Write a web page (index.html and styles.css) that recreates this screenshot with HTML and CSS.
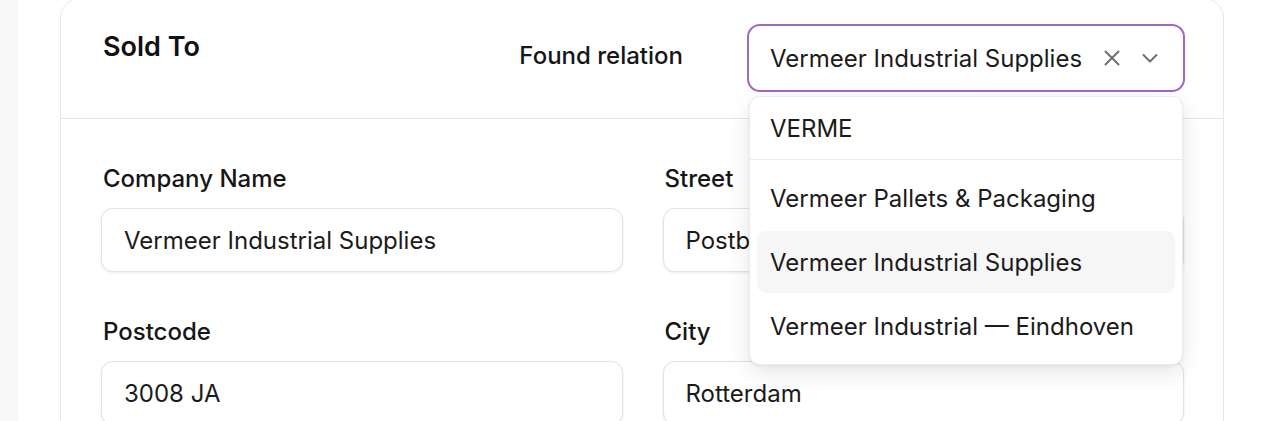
FILE: index.html
```html
<!DOCTYPE html>
<html lang="en">
<head>
    <meta charset="UTF-8">
    <meta name="viewport" content="width=device-width, initial-scale=1.0">
    <title>Sold To</title>
    <link rel="stylesheet" href="styles.css">
</head>
<body>
    <div class="page">
        <div class="rail"></div>
        <main class="main">
            <section class="card">
                <header class="card-head">
                    <h2 class="card-title">Sold To</h2>
                    <div class="relation">
                        <span class="relation-label">Found relation</span>
                        <div class="combo">
                            <div class="combo-box">
                                <span class="combo-value">Vermeer Industrial Supplies</span>
                                <svg class="combo-icon clear" width="20" height="20" viewBox="0 0 20 20" fill="none" stroke="currentColor" stroke-width="2" stroke-linecap="round">
                                    <path d="M3.5 3.5l13 13M16.5 3.5l-13 13"/>
                                </svg>
                                <svg class="combo-icon" width="18" height="18" viewBox="0 0 18 18" fill="none" stroke="currentColor" stroke-width="2" stroke-linecap="round" stroke-linejoin="round">
                                    <path d="M2.5 6l6.5 6.5L15.5 6"/>
                                </svg>
                            </div>

                            <!-- open dropdown -->
                            <div class="menu">
                                <div class="menu-query">VERME</div>
                                <ul class="menu-list">
                                    <li class="menu-item">Vermeer Pallets &amp; Packaging</li>
                                    <li class="menu-item active">Vermeer Industrial Supplies</li>
                                    <li class="menu-item">Vermeer Industrial — Eindhoven</li>
                                </ul>
                            </div>
                        </div>
                    </div>
                </header>

                <form class="card-body">
                    <div class="field">
                        <label for="company">Company Name</label>
                        <input type="text" id="company" value="Vermeer Industrial Supplies">
                    </div>
                    <div class="field">
                        <label for="street">Street</label>
                        <input type="text" id="street" value="Postbus 1822">
                    </div>
                    <div class="field">
                        <label for="postcode">Postcode</label>
                        <input type="text" id="postcode" value="3008 JA">
                    </div>
                    <div class="field">
                        <label for="city">City</label>
                        <input type="text" id="city" value="Rotterdam">
                    </div>
                </form>
            </section>
        </main>
    </div>
</body>
</html>
```

FILE: styles.css
```css
* {
    margin: 0;
    padding: 0;
    box-sizing: border-box;
}

body {
    background-color: #fff;
    font-family: 'Inter', 'Liberation Sans', sans-serif;
    color: #1b1b1b;
    overflow: hidden;
}

.page {
    display: flex;
    min-height: 100vh;
}

.rail {
    width: 18px;
    background-color: #f8f8f9;
}

.main {
    flex: 1;
    padding: 0 40px 0 42px;
}

.card {
    margin-top: -2px;
    border: 1px solid #e8e8e8;
    border-radius: 20px;
    background-color: #fff;
}

.card-head {
    display: flex;
    justify-content: space-between;
    align-items: flex-start;
    padding: 25px 38px 26px 42px;
    border-bottom: 1px solid #e6e6e6;
}

.card-title {
    margin-top: 7px;
    font-size: 27px;
    line-height: 32px;
    font-weight: 600;
    color: #111;
}

.relation {
    display: flex;
    align-items: flex-start;
    gap: 64px;
}

.relation-label {
    margin-top: 17px;
    font-size: 24px;
    line-height: 30px;
    font-weight: 500;
    color: #161616;
}

.combo {
    position: relative;
    width: 438px;
}

.combo-box {
    display: flex;
    align-items: center;
    height: 68px;
    padding: 0 24px 0 21px;
    border: 2px solid #9d68c6;
    border-radius: 13px;
}

.combo-value {
    flex: 1;
    min-width: 0;
    white-space: nowrap;
    font-size: 24px;
    color: #1b1b1b;
}

.combo-icon {
    flex-shrink: 0;
    color: #707070;
}

.combo-icon.clear {
    margin-right: 19px;
}

.menu {
    position: absolute;
    top: 72px;
    left: 2px;
    width: 434px;
    background-color: #fff;
    border: 1px solid #ececec;
    border-radius: 11px;
    box-shadow: 0 8px 22px rgba(0, 0, 0, 0.10), 0 1px 3px rgba(0, 0, 0, 0.06);
    z-index: 2;
}

.menu-query {
    height: 63px;
    display: flex;
    align-items: center;
    padding-left: 20px;
    font-size: 24px;
    border-bottom: 1px solid #ededed;
}

.menu-list {
    list-style: none;
    display: flex;
    flex-direction: column;
    gap: 2px;
    padding: 7px;
}

.menu-item {
    height: 62px;
    display: flex;
    align-items: center;
    padding-left: 13px;
    font-size: 24px;
    border-radius: 9px;
}

.menu-item.active {
    background-color: #f6f6f6;
}

.card-body {
    display: grid;
    grid-template-columns: 1fr 1fr;
    column-gap: 40px;
    row-gap: 46px;
    padding: 46px 39px 40px 40px;
}

.field label {
    display: block;
    margin-bottom: 15px;
    padding-left: 2px;
    font-size: 24px;
    line-height: 28px;
    font-weight: 500;
    color: #161616;
}

.field input {
    width: 100%;
    height: 64px;
    padding: 0 22px;
    border: 1px solid #e2e2e2;
    border-radius: 12px;
    box-shadow: 0 1px 3px rgba(0, 0, 0, 0.08);
    font-family: inherit;
    font-size: 24px;
    color: #1b1b1b;
    background-color: #fff;
    outline: none;
}
```
